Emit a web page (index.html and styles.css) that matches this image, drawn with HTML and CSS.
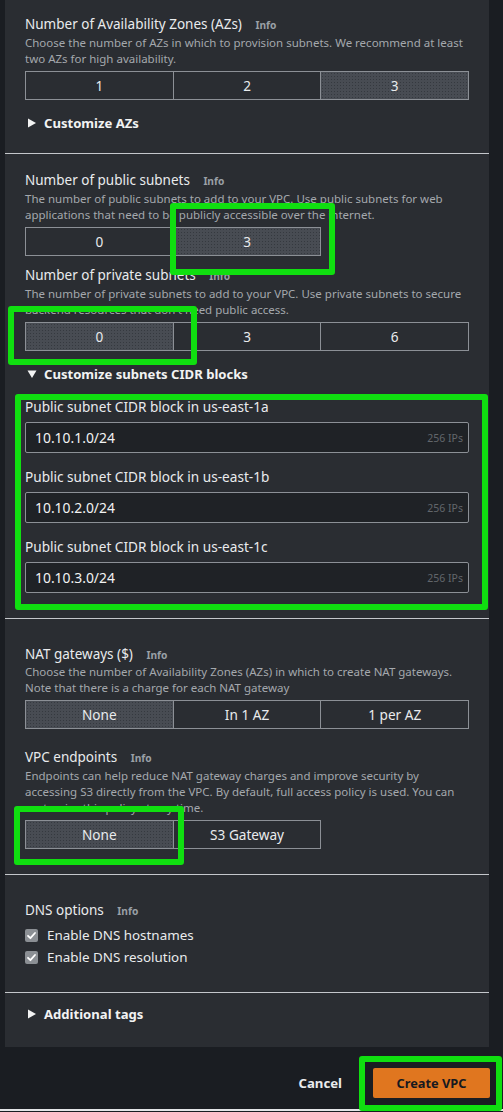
FILE: index.html
```html
<!DOCTYPE html>
<html>
<head>
<meta charset="utf-8">
<link rel="stylesheet" href="styles.css">
</head>
<body>
<div class="page">
  <div class="panel">
    <section class="sec s1">
      <div class="label">Number of Availability Zones (AZs) <span class="info">Info</span></div>
      <div class="desc">Choose the number of AZs in which to provision subnets. We recommend at least two AZs for high availability.</div>
      <div class="seg">
        <div class="opt">1</div>
        <div class="opt">2</div>
        <div class="opt sel">3</div>
      </div>
      <div class="expander mt14">
        <svg class="tri" width="10" height="10" viewBox="0 0 10 10"><polygon points="1,0.5 9,5 1,9.5" fill="#f2f3f3"/></svg>
        <span>Customize AZs</span>
      </div>
    </section>

    <section class="sec s2">
      <div class="label">Number of public subnets <span class="info">Info</span></div>
      <div class="desc">The number of public subnets to add to your VPC. Use public subnets for web applications that need to be publicly accessible over the internet.</div>
      <div class="seg">
        <div class="opt">0</div>
        <div class="opt sel">3</div>
      </div>
      <div class="label mt11">Number of private subnets <span class="info">Info</span></div>
      <div class="desc">The number of private subnets to add to your VPC. Use private subnets to secure backend resources that don't need public access.</div>
      <div class="seg">
        <div class="opt sel">0</div>
        <div class="opt">3</div>
        <div class="opt">6</div>
      </div>
      <div class="expander mt14">
        <svg class="tri" width="10" height="10" viewBox="0 0 10 10"><polygon points="0.5,1.5 9.5,1.5 5,9" fill="#f2f3f3"/></svg>
        <span>Customize subnets CIDR blocks</span>
      </div>
      <div class="cidr-label">Public subnet CIDR block in us-east-1a</div>
      <div class="input"><span class="val">10.10.1.0/24</span><span class="ips">256 IPs</span></div>
      <div class="cidr-label">Public subnet CIDR block in us-east-1b</div>
      <div class="input"><span class="val">10.10.2.0/24</span><span class="ips">256 IPs</span></div>
      <div class="cidr-label">Public subnet CIDR block in us-east-1c</div>
      <div class="input"><span class="val">10.10.3.0/24</span><span class="ips">256 IPs</span></div>
    </section>

    <section class="sec s3">
      <div class="label">NAT gateways ($) <span class="info">Info</span></div>
      <div class="desc mt1">Choose the number of Availability Zones (AZs) in which to create NAT gateways. Note that there is a charge for each NAT gateway</div>
      <div class="seg">
        <div class="opt sel">None</div>
        <div class="opt">In 1 AZ</div>
        <div class="opt">1 per AZ</div>
      </div>
      <div class="label mt19">VPC endpoints <span class="info">Info</span></div>
      <div class="desc">Endpoints can help reduce NAT gateway charges and improve security by accessing S3 directly from the VPC. By default, full access policy is used. You can customize this policy at any time.</div>
      <div class="seg">
        <div class="opt sel">None</div>
        <div class="opt">S3 Gateway</div>
      </div>
    </section>

    <section class="sec s4">
      <div class="label">DNS options <span class="info">Info</span></div>
      <div class="check first">
        <span class="box"><svg width="13" height="13" viewBox="0 0 13 13"><polyline points="3,6.8 5.4,9.2 10,4" fill="none" stroke="#ffffff" stroke-width="1.8" stroke-linecap="round" stroke-linejoin="round"/></svg></span>
        <span>Enable DNS hostnames</span>
      </div>
      <div class="check">
        <span class="box"><svg width="13" height="13" viewBox="0 0 13 13"><polyline points="3,6.8 5.4,9.2 10,4" fill="none" stroke="#ffffff" stroke-width="1.8" stroke-linecap="round" stroke-linejoin="round"/></svg></span>
        <span>Enable DNS resolution</span>
      </div>
    </section>

    <section class="sec s5">
      <div class="expander">
        <svg class="tri" width="10" height="10" viewBox="0 0 10 10"><polygon points="1,0.5 9,5 1,9.5" fill="#f2f3f3"/></svg>
        <span>Additional tags</span>
      </div>
    </section>
  </div>

  <div class="footer">
    <span class="cancel">Cancel</span>
    <span class="create">Create VPC</span>
  </div>
  <div class="strip"></div>

  <div class="annot an1"></div>
  <div class="annot an2"></div>
  <div class="annot an3"></div>
  <div class="annot an4"></div>
  <div class="annot an5"></div>
</div>
</body>
</html>
```

FILE: styles.css
```css
* { box-sizing: border-box; }
html, body { margin: 0; padding: 0; }
body {
  background: #1a1d22;
  font-family: "Noto Sans", "Open Sans", sans-serif;
  color: #e9ebed;
}
.page {
  position: relative;
  width: 503px;
  height: 1112px;
  overflow: hidden;
  background: #1a1d22;
}
.panel {
  margin-left: 5px;
  width: 484px;
  background: #2a2d32;
}
.sec {
  padding-left: 20px;
  border-bottom: 1px solid #c4c7cb;
}
.s1 { padding-top: 15px; padding-bottom: 21px; }
.s2 { padding-top: 17px; padding-bottom: 25px; }
.s3 { padding-top: 26px; padding-bottom: 25px; }
.s4 { padding-top: 26px; padding-bottom: 26px; }
.s5 { padding-top: 12px; padding-bottom: 24px; border-bottom: none; }

.label {
  font-size: 13.5px;
  line-height: 18px;
  height: 18px;
  color: #e9ebed;
  white-space: nowrap;
}
.info {
  font-size: 10.2px;
  font-weight: 700;
  color: #9aa0a6;
  margin-left: 10px;
}
.desc {
  margin-top: 2px;
  width: 446px;
  font-size: 11.5px;
  line-height: 16px;
  color: #a4a8ad;
}
.mt1 { margin-top: 1px; }
.mt11 { margin-top: 10px; }
.mt14 { margin-top: 14px; }
.mt19 { margin-top: 19px; }

.seg {
  margin-top: 4px;
  display: flex;
  height: 29px;
}
.opt {
  flex: 0 0 148.7px;
  height: 29px;
  border: 1px solid #8c9096;
  margin-left: -1px;
  display: flex;
  align-items: center;
  justify-content: center;
  font-size: 13.6px;
  color: #e9ebed;
}
.opt:first-child { margin-left: 0; }
.opt.sel {
  background-color: #484c53;
  background-image: radial-gradient(circle, rgba(30,33,38,0.45) 0.6px, transparent 0.9px);
  background-size: 3px 3px;
}

.expander {
  display: flex;
  align-items: center;
  height: 18px;
  font-size: 13.1px;
  font-weight: 700;
  color: #f2f3f3;
}
.tri { margin-left: 2px; margin-right: 7px; }

.cidr-label {
  margin-top: 15px;
  height: 18px;
  line-height: 18px;
  font-size: 13.6px;
  color: #e9ebed;
}
.input {
  margin-top: 6px;
  width: 444px;
  height: 31px;
  border: 1px solid #8c9096;
  border-radius: 2px;
  background: #1f2226;
  display: flex;
  align-items: center;
  justify-content: space-between;
  padding: 0 5px 0 9px;
}
.val { font-size: 13.9px; color: #f2f3f3; }
.ips { font-size: 10.5px; color: #62666b; }

.check {
  margin-top: 4px;
  height: 18px;
  display: flex;
  align-items: center;
  font-size: 13.4px;
  color: #e9ebed;
}
.check.first { margin-top: 7px; }
.box {
  width: 13px;
  height: 13px;
  border-radius: 2px;
  background: #8b8f94;
  margin-right: 9px;
  display: flex;
}

.footer {
  height: 62px;
  display: flex;
  justify-content: flex-end;
  align-items: flex-start;
  padding-top: 21px;
  padding-right: 13px;
}
.cancel {
  height: 30px;
  line-height: 30px;
  font-size: 13.2px;
  font-weight: 700;
  color: #e9ebed;
  margin-right: 31px;
}
.create {
  width: 117px;
  height: 30px;
  line-height: 30px;
  text-align: center;
  background: #e0761f;
  border-radius: 2px;
  font-size: 12.8px;
  font-weight: 700;
  color: #16191f;
}
.strip {
  height: 2px;
  background: #e3e5e7;
}

.annot {
  position: absolute;
  border: 6px solid #10df10;
  border-radius: 3px;
}
.an1 { left: 170px; top: 203px; width: 165px; height: 72px; }
.an2 { left: 8px; top: 306px; width: 189px; height: 59px; }
.an3 { left: 15px; top: 394px; width: 473px; height: 216px; }
.an4 { left: 14px; top: 806px; width: 170px; height: 59px; }
.an5 { left: 359px; top: 1056px; width: 143px; height: 55px; }
```
